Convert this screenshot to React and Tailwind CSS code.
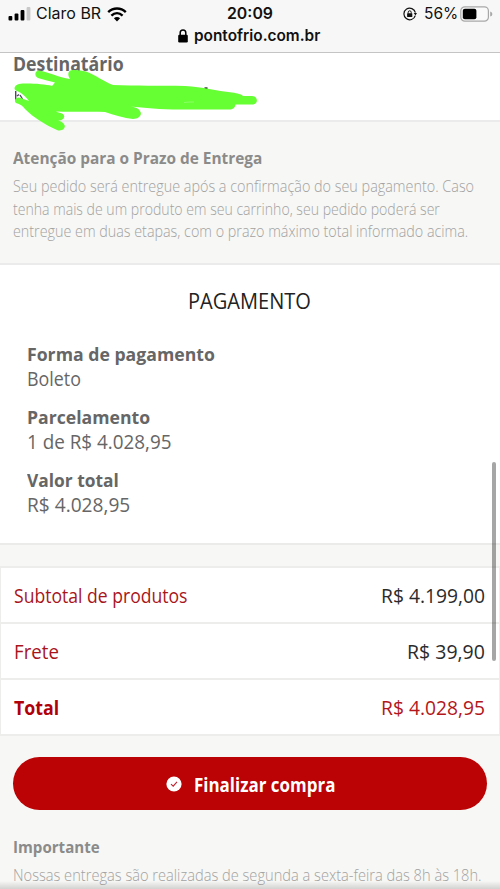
import { useLayoutEffect, useRef, useState } from 'react';

// Text condensed or widened horizontally to occupy a given width.
function Fit({ w, right = false, className = '', children }) {
  const ref = useRef(null);
  const [scale, setScale] = useState(1);
  useLayoutEffect(() => {
    setScale(w / ref.current.offsetWidth);
  }, [w]);
  return (
    <span
      ref={ref}
      className={`block w-max whitespace-nowrap ${right ? 'origin-right' : 'origin-left'} ${className}`}
      style={{ transform: `scaleX(${scale})` }}
    >
      {children}
    </span>
  );
}

function StatusBar() {
  return (
    <header className="h-[53px] border-b border-[#c4c4c4] bg-[#f7f7f7] font-['Inter',sans-serif] text-[#111]">
      <div className="grid h-[28px] grid-cols-[227px_46px_1fr] items-center">
        <div className="flex items-center pl-[8px]">
          <svg width="23" height="14" viewBox="0 0 23 14">
            <rect x="0.5" y="9" width="3.8" height="4.5" rx="1" fill="#000" />
            <rect x="6.6" y="6.5" width="3.8" height="7" rx="1" fill="#000" />
            <rect x="12.6" y="3" width="3.8" height="10.5" rx="1" fill="#000" />
            <rect x="18.6" y="0" width="3.8" height="13.5" rx="1" fill="#c9c9c9" />
          </svg>
          <div className="ml-[5px] w-[64px]">
            <Fit w={65} className="text-[15.5px] leading-[28px]">Claro BR</Fit>
          </div>
          <svg className="ml-[7px]" width="20" height="15" viewBox="0 0 20 15" fill="none" stroke="#000">
            <path d="M1.2 5.2C6.2 .3 13.8 .3 18.8 5.2" strokeWidth="2.4" />
            <path d="M4.4 8.6C7.7 5.5 12.3 5.5 15.6 8.6" strokeWidth="2.4" />
            <path d="M6.9 11.2C8.8 9.5 11.2 9.5 13.1 11.2L10 14.6Z" fill="#000" stroke="none" />
          </svg>
        </div>
        <Fit w={46} className="text-[15.5px] font-semibold leading-[28px]">20:09</Fit>
        <div className="flex items-center pl-[130px]">
          <svg width="14" height="14" viewBox="0 0 14 14">
            <path d="M12.3 8.6A5.8 5.8 0 1 1 12.4 5.7" fill="none" stroke="#111" strokeWidth="1.2" />
            <path d="M10.7 6H14L12.5 8.5Z" fill="#111" />
            <rect x="4.1" y="6.2" width="5.2" height="3.9" rx=".5" fill="#111" />
            <path d="M5.2 6.5V5.3a1.5 1.5 0 0 1 3 0V6.5" fill="none" stroke="#111" strokeWidth="1" />
          </svg>
          <div className="ml-[7px] w-[34px]">
            <Fit w={34} className="text-[15.5px] leading-[28px]">56%</Fit>
          </div>
          <svg className="ml-[2px] -mt-px" width="33" height="16" viewBox="0 0 33 16">
            <rect x=".8" y=".8" width="27.6" height="14.4" rx="4" fill="#fafafa" stroke="#a8a8a8" strokeWidth="1.2" />
            <rect x="2.8" y="2.8" width="13.6" height="10.4" rx="2" fill="#000" />
            <path d="M30.2 5.5Q32.4 6 32.4 8T30.2 10.5Z" fill="#a8a8a8" />
          </svg>
        </div>
      </div>
      <div className="flex h-[15px] items-center pl-[178px]">
        <svg width="10" height="14" viewBox="0 0 10 14">
          <rect x=".2" y="5.8" width="9.6" height="7.6" rx="1.2" fill="#000" />
          <path d="M2.2 6.5V3.8a2.8 2.8 0 0 1 5.6 0V6.5" fill="none" stroke="#000" strokeWidth="1.5" />
        </svg>
        <div className="ml-[6px]">
          <Fit w={126} className="text-[15.5px] font-semibold leading-[15px]">pontofrio.com.br</Fit>
        </div>
      </div>
    </header>
  );
}

function Field({ label, labelWidth, value, valueWidth }) {
  return (
    <div className="mb-[11px] text-[#666]">
      <Fit w={labelWidth} className="text-[18.5px] font-bold leading-[26px]">{label}</Fit>
      <Fit w={valueWidth} className="pb-[2px] text-[19.5px] leading-[24px]">{value}</Fit>
    </div>
  );
}

function Row({ label, labelWidth, labelClass = 'text-[19.5px] text-[#a8151b]', value, valueWidth, valueClass = 'text-[#2b2b2b]' }) {
  return (
    <div className="flex h-[56px] items-center justify-between border-b-2 border-[#ededec] pl-[13px] pr-[14px] pt-[2px] leading-[52px]">
      <Fit w={labelWidth} className={labelClass}>{label}</Fit>
      <Fit w={valueWidth} right className={`text-[20px] ${valueClass}`}>{value}</Fit>
    </div>
  );
}

export default function App() {
  return (
    <div className="relative h-[889px] w-[500px] overflow-hidden bg-[#f7f7f5] font-['Open_Sans','Noto_Sans',sans-serif]">
      <StatusBar />

      <section className="relative h-[69px] border-b-2 border-[#ebebeb] bg-white pl-[13px]">
        <Fit w={111} className="text-[19px] font-bold leading-[22px] text-[#666]">Destinatário</Fit>
        <svg className="absolute left-0 top-0" width="270" height="80" viewBox="0 53 270 80">
          <path d="M15.7 91V100M17 96 19 94.5M20 95 22.5 99" fill="none" stroke="#4b4b5c" strokeWidth="1.4" />
          <path d="M204.5 88.3H207.5" stroke="#333" strokeWidth="2" />
          <path
            d="M38 70.5C34 72 35 77 38 78C44 80 50 81 55 82.5L52 86C44 84 27 83 19 84C14 85 13 90 17 91C22 93 26 97 29 101C25 100 22 98 18 97.5C15 98 14 101 16 103C20 104 23 106 25 109C34 118 46 125 57 130C62 132 66 128 64.5 125C63 122 60 121 58 120.5C63 121 66 117 63 114C61 113 58 112.5 56 111.5C72 112.5 90 111 105 112C114 115 124 118 133 119C139 119 142 115 140.500 112C139 108 135 107 130 106.5C145 108 160 109.500 180 109.500H229C233 109.500 235 108 235.500 104.500H252C259 104.500 258 96 252 96H243C241 94 238 93.500 232 92.500C216 91 203 87 185 86C160 85.500 135 86 113 85C104 82 96 75 86 71.500C80 70 72 69 69.500 71C67 74 69 77 70 79C59 78 47 71 38 70.500Z"
            fill="#66ff33"
          />
          <path d="M184 102.500C188 102 192 102 194 102" stroke="#8cff66" fill="none" />
        </svg>
      </section>

      <section className="h-[143px] border-b-2 border-[#ebebeb] pl-[13px] pt-[24px]">
        <Fit w={249} className="text-[16.5px] font-bold leading-[23px] text-[#8b8b8a]">Atenção para o Prazo de Entrega</Fit>
        <div className="pt-[6px] text-[17px] font-light leading-[22.6px] text-[#a2a2a1]">
          <Fit w={461}>Seu pedido será entregue após a confirmação do seu pagamento. Caso</Fit>
          <Fit w={427}>tenha mais de um produto em seu carrinho, seu pedido poderá ser</Fit>
          <Fit w={455}>entregue em duas etapas, com o prazo máximo total informado acima.</Fit>
        </div>
      </section>

      <section className="h-[280px] border-b-2 border-[#ebebe9] bg-white pl-[26px] pt-[19px]">
        <div className="pl-[162px]">
          <Fit w={123} className="text-[22px] leading-[32px] text-[#222]">PAGAMENTO</Fit>
        </div>
        <div className="pl-[0.5px] pt-[25px]">
          <Field label="Forma de pagamento" labelWidth={188} value="Boleto" valueWidth={54} />
          <Field label="Parcelamento" labelWidth={123} value="1 de R$ 4.028,95" valueWidth={144} />
          <Field label="Valor total" labelWidth={92} value="R$ 4.028,95" valueWidth={103} />
        </div>
      </section>

      <section className="mt-[21px] h-[170px] border-x border-t-2 border-[#ededec] bg-white">
        <Row label="Subtotal de produtos" labelWidth={173} value="R$ 4.199,00" valueWidth={104} />
        <Row label="Frete" labelWidth={45} value="R$ 39,90" valueWidth={78} />
        <Row
          label="Total"
          labelWidth={45}
          labelClass="text-[19px] font-bold text-[#b00008]"
          value="R$ 4.028,95"
          valueWidth={104}
          valueClass="text-[#b3161c]"
        />
      </section>

      <button className="mx-[13px] mt-[21px] flex h-[53px] w-[474px] items-center rounded-full bg-[#bb0204] pl-[153px] pt-px text-white">
        <svg width="16" height="16" viewBox="0 0 16 16">
          <circle cx="8" cy="8" r="7.6" fill="#fff" />
          <path d="M5 8.2 7.2 10.2 11 5.8" fill="none" stroke="#bb2530" strokeWidth="1.1" />
        </svg>
        <span className="ml-[12px] pt-[2px]">
          <Fit w={141} className="text-[19px] font-bold leading-[51px]">Finalizar compra</Fit>
        </span>
      </button>

      <section className="pl-[13px] pt-[25px]">
        <Fit w={87} className="text-[16.5px] font-bold leading-[23px] text-[#8b8b8a]">Importante</Fit>
        <Fit w={469} className="pt-[5px] text-[17px] font-light leading-[23px] text-[#a2a2a1]">
          Nossas entregas são realizadas de segunda a sexta-feira das 8h às 18h.
        </Fit>
      </section>

      <div className="absolute bottom-0 left-0 h-[8px] w-full bg-gradient-to-b from-transparent to-black/15" />
      <div className="absolute left-[492px] top-[462px] h-[199px] w-[4px] rounded-full bg-black/35" />
    </div>
  );
}
